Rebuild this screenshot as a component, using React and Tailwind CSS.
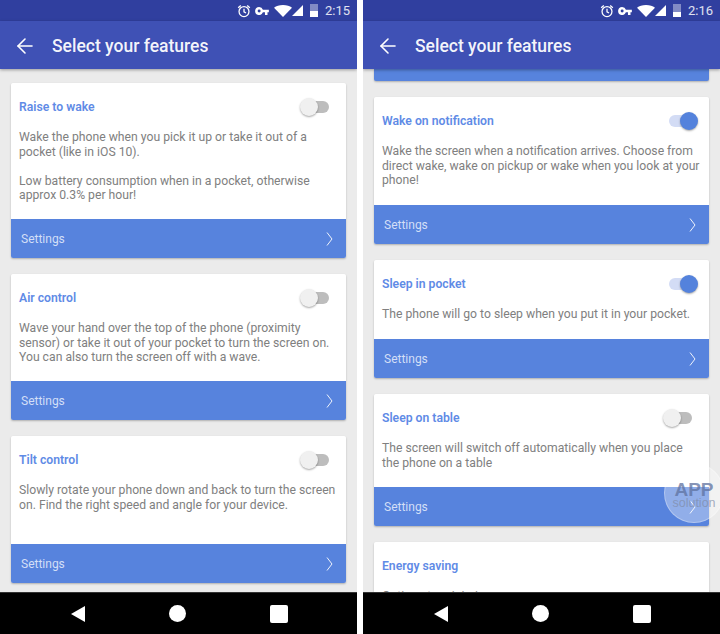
import React from 'react';
import { ArrowLeft } from 'lucide-react';

function StatusIcons({ time, batteryLevel }) {
  return (
    <div className="h-[21px] shrink-0 bg-[#303f9f] flex items-center justify-end pr-[7px] text-white">
      <svg width="14" height="14" viewBox="0 0 24 24" fill="none" stroke="white" strokeWidth="2.200">
        <circle cx="12" cy="13" r="8.500" />
        <path d="M12 8V13.500L15.500 15.500M2 6.500L6.500 2.500M22 6.500L17.500 2.500" />
      </svg>
      <svg width="14" height="8" viewBox="0 0 24 14" fill="white" className="ml-[4px]">
        <path fillRule="evenodd" d="M7 0a7 7 0 0 1 6.600 4.700H24v4.600h-2.400V14h-4.400V9.300h-3.600A7 7 0 1 1 7 0zm0 4.400a2.600 2.600 0 1 0 0 5.200 2.600 2.600 0 0 0 0-5.200z" />
      </svg>
      <svg width="18" height="12" viewBox="0 0 24 16" fill="white" className="ml-[5px]">
        <path d="M12 16L0 3.500C3 1.300 7 0 12 0s9 1.300 12 3.500z" />
      </svg>
      <svg width="11" height="11" viewBox="0 0 12 12" fill="white">
        <path d="M12 0V12H0z" />
      </svg>
      <div className="w-[8px] h-[13px] ml-[7px] bg-white/40 flex flex-col justify-end">
        <div className="bg-white" style={{ height: batteryLevel }} />
      </div>
      <span className="text-[13px] leading-none text-white/85 ml-[7px]">{time}</span>
    </div>
  );
}

function AppBar() {
  return (
    <div className="h-[48px] shrink-0 bg-[#3f51b5] flex items-center pt-[2px] shadow-[0_1px_3px_rgba(0,0,0,0.35)] relative z-10">
      <ArrowLeft size={24} strokeWidth={1.6} className="text-white ml-[13px] -mt-[1px]" />
      <span className="ml-[15px] text-[17.500px] font-medium text-white/95">Select your features</span>
    </div>
  );
}

function Toggle({ on }) {
  if (on) {
    return (
      <div className="flex items-center -mr-[6px]">
        <div className="w-[21px] h-[12px] rounded-full bg-[#d3dcf5]" />
        <div className="w-[18px] h-[18px] rounded-full bg-[#5482dc] -ml-[10px] shadow-[0_1px_2px_rgba(0,0,0,0.35)]" />
      </div>
    );
  }
  return (
    <div className="flex items-center">
      <div className="w-[18px] h-[18px] rounded-full bg-[#f0f0f0] shadow-[0_1px_2px_rgba(0,0,0,0.35)] relative z-10" />
      <div className="w-[21px] h-[12px] rounded-full bg-[#bdbdbd] -ml-[10px]" />
    </div>
  );
}

function SettingsBar() {
  return (
    <div className="h-[39px] bg-[#5783dd] flex items-center justify-between pt-[1px] pl-[10px] pr-[13px]">
      <span className="text-[12px] text-[#d3dff7]">Settings</span>
      <svg width="7" height="14" viewBox="0 0 7 14" fill="none" stroke="white" strokeWidth="1" className="opacity-90 -mt-[1px]">
        <path d="M1 0.500L6 7L1 13.500" />
      </svg>
    </div>
  );
}

function FeatureCard({ title, on, clipped, bodyHeight, lines }) {
  return (
    <div className="shrink-0 rounded-[2px] overflow-hidden shadow-[0_1px_2px_rgba(0,0,0,0.25)]">
      <div className="bg-white px-[8px] pt-[15px]" style={{ height: bodyHeight }}>
        <div className="flex items-center justify-between h-[18px] pr-[9px]">
          <span className="text-[12.200px] font-semibold text-[#5f8be6]">{title}</span>
          {!clipped && <Toggle on={on} />}
        </div>
        <div className="mt-[14px] text-[12.200px] leading-[14.500px] text-[#808080]">
          {lines.map((line, i) => (
            <div key={i} className="whitespace-nowrap h-[14.500px]">{line}</div>
          ))}
        </div>
      </div>
      {!clipped && <SettingsBar />}
    </div>
  );
}

function NavBar() {
  return (
    <div className="h-[42px] shrink-0 bg-black flex items-center justify-center gap-[84px] pl-[1px] border-t border-[#333333]">
      <svg width="14" height="16" viewBox="0 0 14 16" fill="white">
        <path d="M14 0V16L0 8z" />
      </svg>
      <div className="w-[17px] h-[17px] rounded-full bg-white" />
      <div className="w-[18px] h-[18px] rounded-[2px] bg-white" />
    </div>
  );
}

function Phone({ time, batteryLevel, topPad, children }) {
  return (
    <div className="w-[357px] h-[634px] flex flex-col relative overflow-hidden">
      <StatusIcons time={time} batteryLevel={batteryLevel} />
      <AppBar />
      <div className={`flex-1 bg-[#ebebeb] overflow-hidden flex flex-col gap-[16px] px-[11px] min-h-0 ${topPad}`}>
        {children}
      </div>
      <NavBar />
    </div>
  );
}

export default function App() {
  return (
    <div className="w-[720px] h-[634px] bg-white flex justify-between overflow-hidden relative font-['Roboto',sans-serif]">
      <Phone time="2:15" batteryLevel="6px" topPad="pt-[14px]">
        <FeatureCard
          title="Raise to wake"
          bodyHeight={136}
          lines={[
            'Wake the phone when you pick it up or take it out of a',
            'pocket (like in iOS 10).',
            '\u00a0',
            'Low battery consumption when in a pocket, otherwise',
            'approx 0.3% per hour!',
          ]}
        />
        <FeatureCard
          title="Air control"
          bodyHeight={107}
          lines={[
            'Wave your hand over the top of the phone (proximity',
            'sensor) or take it out of your pocket to turn the screen on.',
            'You can also turn the screen off with a wave.',
          ]}
        />
        <FeatureCard
          title="Tilt control"
          bodyHeight={108}
          lines={[
            'Slowly rotate your phone down and back to turn the screen',
            'on. Find the right speed and angle for your device.',
          ]}
        />
      </Phone>
      <Phone time="2:16" batteryLevel="5px" topPad="pt-0">
        <div className="h-[12px] shrink-0 bg-[#5783dd] rounded-b-[2px] shadow-[0_1px_2px_rgba(0,0,0,0.25)]" />
        <FeatureCard
          on
          title="Wake on notification"
          bodyHeight={108}
          lines={[
            'Wake the screen when a notification arrives. Choose from',
            'direct wake, wake on pickup or wake when you look at your',
            'phone!',
          ]}
        />
        <FeatureCard
          on
          title="Sleep in pocket"
          bodyHeight={79}
          lines={['The phone will go to sleep when you put it in your pocket.']}
        />
        <FeatureCard
          title="Sleep on table"
          bodyHeight={93}
          lines={[
            'The screen will switch off automatically when you place',
            'the phone on a table',
          ]}
        />
        <FeatureCard
          clipped
          title="Energy saving"
          bodyHeight={108}
          lines={['Options to minimize power usage']}
        />
      </Phone>
      {/* watermark sits over the second phone */}
      <div className="absolute left-[664px] top-[463px] w-[60px] h-[60px] rounded-full bg-white/35 border border-white/30 flex flex-col items-center pt-[18px]">
        <span className="text-[19px] leading-[16px] font-bold text-[#5f72a0]/75 font-['Liberation_Sans',sans-serif]">APP</span>
        <span className="text-[12.500px] leading-[11px] text-[#7f8ba6]/70 font-['Liberation_Sans',sans-serif]">solution</span>
      </div>
    </div>
  );
}
